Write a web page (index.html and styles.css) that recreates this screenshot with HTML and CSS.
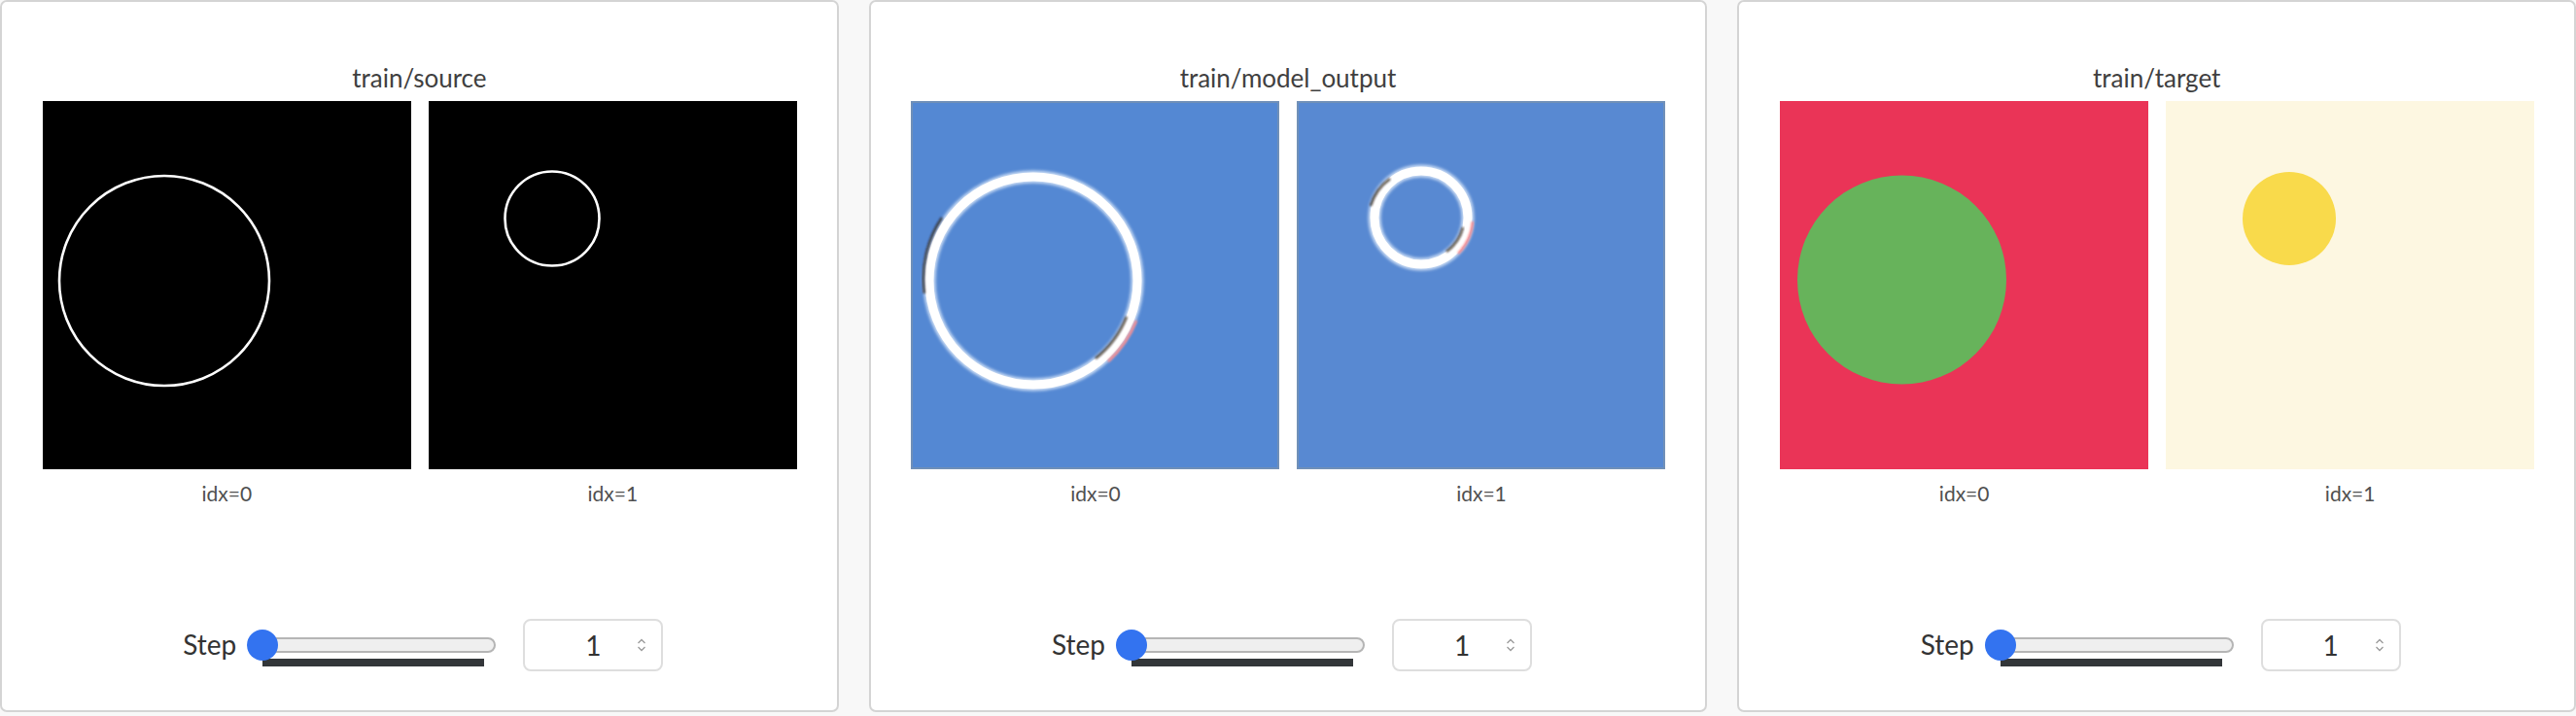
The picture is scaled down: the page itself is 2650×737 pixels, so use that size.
FILE: index.html
```html
<!DOCTYPE html>
<html>
<head>
<meta charset="utf-8">
<link rel="stylesheet" href="styles.css">
</head>
<body>
<div class="page">

  <section class="card">
    <h2 class="title">train/source</h2>
    <div class="gallery">
      <figure class="item">
        <svg class="pic" viewBox="0 0 379 379" width="379" height="379">
          <rect width="379" height="379" fill="#000"/>
          <circle cx="125" cy="185" r="108" fill="none" stroke="#fff" stroke-width="2.6"/>
        </svg>
        <figcaption class="caption">idx=0</figcaption>
      </figure>
      <figure class="item">
        <svg class="pic" viewBox="0 0 379 379" width="379" height="379">
          <rect width="379" height="379" fill="#000"/>
          <circle cx="127" cy="121" r="48.5" fill="none" stroke="#fff" stroke-width="2.6"/>
        </svg>
        <figcaption class="caption">idx=1</figcaption>
      </figure>
    </div>
    <div class="controls">
      <span class="label">Step</span>
      <div class="slider">
        <div class="track"></div>
        <div class="ticks"></div>
        <div class="thumb"></div>
      </div>
      <div class="number">
        <span class="value">1</span>
        <svg class="spin" viewBox="0 0 10 16" width="10" height="16">
          <path d="M1.5 6 L5 2.5 L8.5 6 M1.5 10 L5 13.5 L8.5 10" fill="none" stroke="#9a9a9a" stroke-width="1.3"/>
        </svg>
      </div>
    </div>
  </section>

  <section class="card">
    <h2 class="title">train/model_output</h2>
    <div class="gallery">
      <figure class="item">
        <svg class="pic" viewBox="0 0 379 379" width="379" height="379">
          <defs>
            <filter id="glow1" x="-20%" y="-20%" width="140%" height="140%">
              <feGaussianBlur stdDeviation="1.6"/>
            </filter>
            <filter id="soft1"><feGaussianBlur stdDeviation="0.6"/></filter>
            <filter id="fringe1"><feGaussianBlur stdDeviation="1"/></filter>
          </defs>
          <rect width="379" height="379" fill="#6f8fb8"/>
          <rect x="2" y="2" width="375" height="375" fill="#5488d3"/>
          <circle cx="126" cy="185" r="107" fill="none" stroke="#eef6ff" stroke-width="13" filter="url(#glow1)" opacity="0.75"/>
          <circle cx="126" cy="185" r="107" fill="none" stroke="#ffffff" stroke-width="9" filter="url(#soft1)"/>
          <path d="M32 120 A112 112 0 0 0 14 198" fill="none" stroke="#1e0e06" stroke-width="2.4" filter="url(#fringe1)" opacity="0.75"/>
          <path d="M222 222 A102.5 102.5 0 0 1 190 265" fill="none" stroke="#1e0e06" stroke-width="2.4" filter="url(#fringe1)" opacity="0.75"/>
          <path d="M232 226 A113 113 0 0 1 203 268" fill="none" stroke="#ff8585" stroke-width="2.4" filter="url(#fringe1)"/>
        </svg>
        <figcaption class="caption">idx=0</figcaption>
      </figure>
      <figure class="item">
        <svg class="pic" viewBox="0 0 379 379" width="379" height="379">
          <defs>
            <filter id="glow2" x="-30%" y="-30%" width="160%" height="160%">
              <feGaussianBlur stdDeviation="1.6"/>
            </filter>
            <filter id="soft2"><feGaussianBlur stdDeviation="0.6"/></filter>
            <filter id="fringe2"><feGaussianBlur stdDeviation="1"/></filter>
          </defs>
          <rect width="379" height="379" fill="#7090b8"/>
          <rect x="2" y="2" width="375" height="375" fill="#5889d2"/>
          <circle cx="128" cy="120" r="48" fill="none" stroke="#eef6ff" stroke-width="13" filter="url(#glow2)" opacity="0.75"/>
          <circle cx="128" cy="120" r="48" fill="none" stroke="#ffffff" stroke-width="9" filter="url(#soft2)"/>
          <path d="M96 80 A53 53 0 0 0 76 108" fill="none" stroke="#1e0e06" stroke-width="2.4" filter="url(#fringe2)" opacity="0.75"/>
          <path d="M171 130 A43.5 43.5 0 0 1 154 155" fill="none" stroke="#1e0e06" stroke-width="2.4" filter="url(#fringe2)" opacity="0.75"/>
          <path d="M181 124 A53 53 0 0 1 166 157" fill="none" stroke="#ff8585" stroke-width="2.4" filter="url(#fringe2)"/>
        </svg>
        <figcaption class="caption">idx=1</figcaption>
      </figure>
    </div>
    <div class="controls">
      <span class="label">Step</span>
      <div class="slider">
        <div class="track"></div>
        <div class="ticks"></div>
        <div class="thumb"></div>
      </div>
      <div class="number">
        <span class="value">1</span>
        <svg class="spin" viewBox="0 0 10 16" width="10" height="16">
          <path d="M1.5 6 L5 2.5 L8.5 6 M1.5 10 L5 13.5 L8.5 10" fill="none" stroke="#9a9a9a" stroke-width="1.3"/>
        </svg>
      </div>
    </div>
  </section>

  <section class="card">
    <h2 class="title">train/target</h2>
    <div class="gallery">
      <figure class="item">
        <svg class="pic" viewBox="0 0 379 379" width="379" height="379">
          <rect width="379" height="379" fill="#ea3457"/>
          <circle cx="125.5" cy="184" r="107.5" fill="#67b35b"/>
        </svg>
        <figcaption class="caption">idx=0</figcaption>
      </figure>
      <figure class="item">
        <svg class="pic" viewBox="0 0 379 379" width="379" height="379">
          <rect width="379" height="379" fill="#fdf7e1"/>
          <circle cx="127" cy="121" r="48" fill="#f9da4b"/>
        </svg>
        <figcaption class="caption">idx=1</figcaption>
      </figure>
    </div>
    <div class="controls">
      <span class="label">Step</span>
      <div class="slider">
        <div class="track"></div>
        <div class="ticks"></div>
        <div class="thumb"></div>
      </div>
      <div class="number">
        <span class="value">1</span>
        <svg class="spin" viewBox="0 0 10 16" width="10" height="16">
          <path d="M1.5 6 L5 2.5 L8.5 6 M1.5 10 L5 13.5 L8.5 10" fill="none" stroke="#9a9a9a" stroke-width="1.3"/>
        </svg>
      </div>
    </div>
  </section>

</div>
</body>
</html>
```

FILE: styles.css
```css
* {
  box-sizing: border-box;
}

html, body {
  margin: 0;
  padding: 0;
  background: #f8f8f8;
}

body {
  font-family: Lato, "Open Sans", "Liberation Sans", sans-serif;
  color: #333;
}

.page {
  display: grid;
  grid-template-columns: repeat(3, 1fr);
  column-gap: 31px;
  width: 2650px;
  height: 737px;
  align-items: start;
}

.card {
  background: #fff;
  border: 2px solid #d4d4d4;
  border-radius: 7px;
  height: 733px;
  padding: 58px 0 0 0;
  display: flex;
  flex-direction: column;
  align-items: center;
}

.title {
  margin: 0 0 4px 0;
  font-weight: 400;
  font-size: 26px;
  line-height: 40px;
  color: #404040;
  text-align: center;
}

.gallery {
  display: grid;
  grid-template-columns: 379px 379px;
  column-gap: 18px;
  justify-content: center;
  margin-left: 1px;
}

.item {
  margin: 0;
  display: flex;
  flex-direction: column;
  align-items: center;
}

.pic {
  display: block;
  width: 379px;
  height: 379px;
}

.caption {
  margin-top: 10px;
  font-size: 21px;
  line-height: 30px;
  color: #505050;
}

.controls {
  margin-top: 114px;
  display: flex;
  align-items: center;
  padding-left: 8px;
  height: 54px;
}

.label {
  font-size: 28px;
  line-height: 32px;
  color: #333;
  margin-right: 11px;
  padding-bottom: 2px;
}

.slider {
  position: relative;
  width: 256px;
  height: 32px;
  margin-right: 28px;
}

.track {
  margin-top: 8px;
  margin-left: 4px;
  height: 16px;
  border: 2px solid #b5b5b5;
  border-radius: 8px;
  background: #efefef;
}

.ticks {
  margin-top: 6px;
  margin-left: 16px;
  width: 228px;
  height: 8px;
  background: #333639;
}

.thumb {
  position: absolute;
  left: 0;
  top: 0;
  width: 32px;
  height: 32px;
  border-radius: 50%;
  background: #3373f0;
}

.number {
  position: relative;
  width: 144px;
  height: 54px;
  border: 2px solid #dedede;
  border-radius: 8px;
  display: flex;
  align-items: center;
  justify-content: center;
  background: #fff;
}

.value {
  font-size: 28px;
  line-height: 32px;
  color: #333;
}

.spin {
  position: absolute;
  right: 15px;
  top: 17px;
}
```
